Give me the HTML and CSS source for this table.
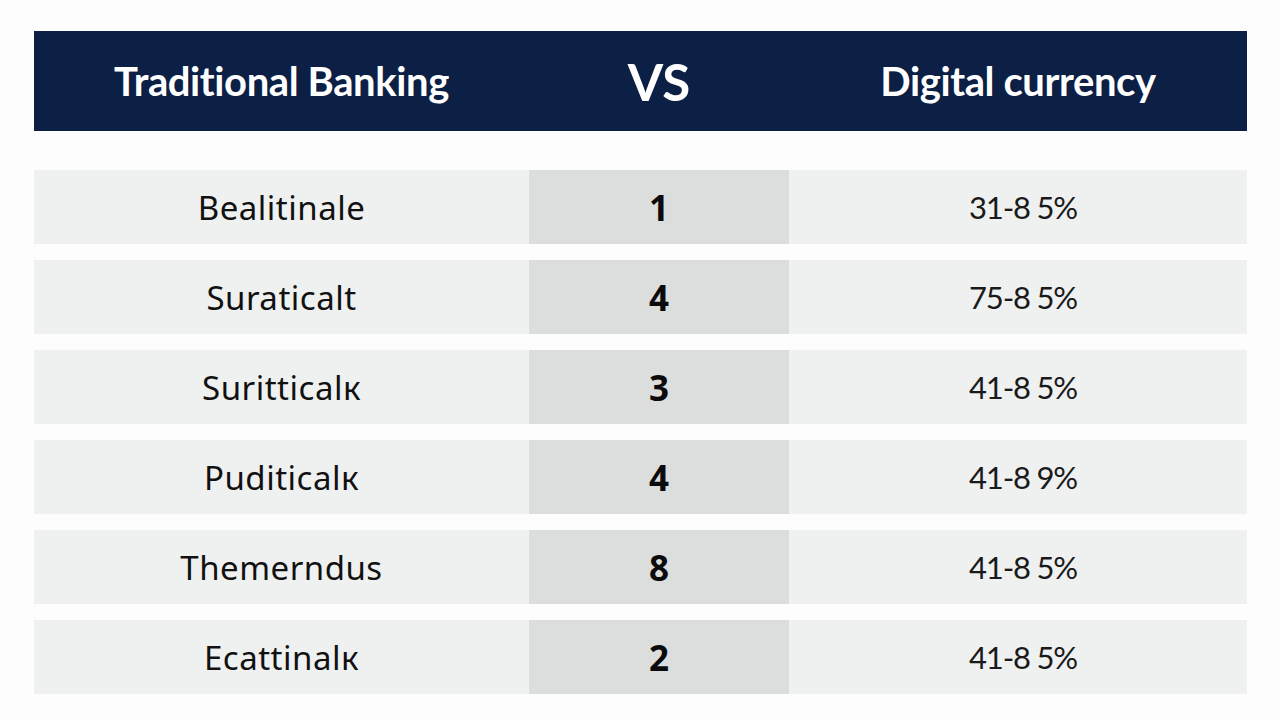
FILE: index.html
```html
<!DOCTYPE html>
<html lang="en">
<head>
<meta charset="utf-8">
<title>Traditional Banking vs Digital currency</title>
<link rel="stylesheet" href="styles.css">
</head>
<body>
<main class="table">
  <header class="head">
    <div class="hcell">Traditional Banking</div>
    <div class="hcell vs">VS</div>
    <div class="hcell">Digital currency</div>
  </header>
  <div class="rows">
    <div class="row"><div class="cell name">Bealitinale</div><div class="cell mid">1</div><div class="cell val">31-8 5%</div></div>
    <div class="row"><div class="cell name">Suraticalt</div><div class="cell mid">4</div><div class="cell val">75-8 5%</div></div>
    <div class="row"><div class="cell name">Surittical&#1082;</div><div class="cell mid">3</div><div class="cell val">41-8 5%</div></div>
    <div class="row"><div class="cell name">Puditical&#1082;</div><div class="cell mid">4</div><div class="cell val">41-8 9%</div></div>
    <div class="row"><div class="cell name">Themerndus</div><div class="cell mid">8</div><div class="cell val">41-8 5%</div></div>
    <div class="row"><div class="cell name">Ecattinal&#1082;</div><div class="cell mid">2</div><div class="cell val">41-8 5%</div></div>
  </div>
</main>
</body>
</html>
```
FILE: styles.css
```css
html, body {
  margin: 0;
  background: #fdfdfd;
}
body {
  padding: 31px 33px 0 34px;
  font-family: "Noto Sans", "Open Sans", sans-serif;
  color: #111;
}
.table {
  width: 1213px;
}
.head {
  display: grid;
  grid-template-columns: 495px 260px 458px;
  height: 100px;
  background: #0c1f45;
  color: #fff;
}
.hcell {
  display: flex;
  align-items: center;
  justify-content: center;
  font-family: Lato, "Noto Sans", sans-serif;
  font-weight: 700;
  font-size: 40px;
  letter-spacing: -0.4px;
  padding-bottom: 0;
}
.hcell.vs {
  font-size: 51px;
  letter-spacing: 0;
}
.rows {
  display: flex;
  flex-direction: column;
  gap: 16px;
  margin-top: 39px;
}
.row {
  display: grid;
  grid-template-columns: 495px 260px 458px;
  height: 74px;
  background: #eff0f0;
}
.cell {
  display: flex;
  align-items: center;
  justify-content: center;
}
.name {
  font-size: 33px;
  letter-spacing: 0.5px;
}
.mid {
  background: #dcdddd;
  font-weight: 700;
  font-size: 35px;
  color: #0b0b0b;
}
.val {
  font-family: Lato, "Noto Sans", sans-serif;
  font-size: 31px;
  letter-spacing: -1.2px;
  color: #1a1a1a;
  padding-left: 10px;
}
```
